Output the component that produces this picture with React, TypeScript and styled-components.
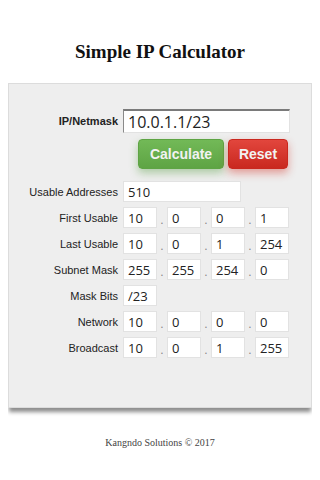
import * as React from "react";
import styled, { createGlobalStyle } from "styled-components";

const GlobalStyle = createGlobalStyle`
  body {
    margin: 8px;
    background: #ffffff;
    font-family: "Liberation Serif", "Times New Roman", serif;
  }
`;

const Title = styled.h1`
  margin: 32px 0 19px;
  font-size: 19px;
  line-height: 24px;
  font-weight: bold;
  text-align: center;
  color: #111;
`;

const Panel = styled.div`
  background: #eeeeee;
  border: 1px solid #dcdcdc;
  box-shadow: 0 5px 4px -1px rgba(0, 0, 0, 0.45);
  padding: 25px 0 49px;
  display: flex;
  flex-direction: column;
`;

const Row = styled.div<{ $gap?: number }>`
  display: flex;
  align-items: center;
  margin-bottom: ${(p) => (p.$gap !== undefined ? p.$gap : 5)}px;
`;

const Label = styled.label<{ $bold?: boolean }>`
  width: 114px;
  flex: none;
  text-align: right;
  padding-right: 5px;
  box-sizing: border-box;
  font-family: "Liberation Sans", Arial, sans-serif;
  font-size: 11px;
  font-weight: ${(p) => (p.$bold ? "bold" : "normal")};
  color: #222;
`;

const Field = styled.div<{ $w: number; $h?: number; $size?: number }>`
  width: ${(p) => p.$w}px;
  height: ${(p) => p.$h || 21}px;
  box-sizing: border-box;
  background: #fff;
  border: 1px solid #e2e2e2;
  padding-left: 4px;
  display: flex;
  align-items: center;
  font-family: "Open Sans", "Noto Sans", sans-serif;
  font-size: ${(p) => p.$size || 13}px;
  color: #222;
`;

const MainField = styled(Field)`
  border-top: 2px solid #7a7a7a;
  border-left: 1px solid #8a8a8a;
  padding-left: 4px;
`;

const Dot = styled.span`
  width: 10px;
  text-align: center;
  align-self: flex-end;
  font-family: "Liberation Sans", Arial, sans-serif;
  font-size: 12px;
  color: #888;
  line-height: 16px;
`;

const Buttons = styled.div`
  display: flex;
  gap: 4px;
  padding-left: 129px;
  margin-bottom: 12px;
`;

const Button = styled.button<{ $c1: string; $c2: string; $glow: string; $w: number }>`
  width: ${(p) => p.$w}px;
  height: 30px;
  border: 1px solid ${(p) => p.$c2};
  border-radius: 4px;
  background: linear-gradient(${(p) => p.$c1}, ${(p) => p.$c2});
  box-shadow: 0 4px 8px ${(p) => p.$glow};
  color: #f2f2f2;
  font-family: "Liberation Sans", Arial, sans-serif;
  font-weight: bold;
  font-size: 14px;
  padding: 0;
`;

const Footer = styled.div`
  margin-top: 29px;
  text-align: center;
  font-size: 10px;
  color: #444;
`;

const Octets: React.FC<{ values: string[] }> = ({ values }) => (
  <>
    {values.map((v, i) => (
      <React.Fragment key={i}>
        {i > 0 && <Dot>.</Dot>}
        <Field $w={34}>{v}</Field>
      </React.Fragment>
    ))}
  </>
);

const rows: [string, string[]][] = [
  ["First Usable", ["10", "0", "0", "1"]],
  ["Last Usable", ["10", "0", "1", "254"]],
  ["Subnet Mask", ["255", "255", "254", "0"]],
];

const rows2: [string, string[]][] = [
  ["Network", ["10", "0", "0", "0"]],
  ["Broadcast", ["10", "0", "1", "255"]],
];

const App: React.FC = () => {
  return (
    <>
      <GlobalStyle />
      <Title>Simple IP Calculator</Title>
      <Panel>
        <Row $gap={6}>
          <Label $bold>IP/Netmask</Label>
          <MainField $w={167} $h={24} $size={16}>
            10.0.1.1/23
          </MainField>
        </Row>
        <Buttons>
          <Button $w={86} $c1="#72b957" $c2="#5ea444" $glow="rgba(90,160,70,0.45)">
            Calculate
          </Button>
          <Button $w={60} $c1="#e2463d" $c2="#c9281f" $glow="rgba(210,50,40,0.45)">
            Reset
          </Button>
        </Buttons>
        <Row>
          <Label>Usable Addresses</Label>
          <Field $w={118}>510</Field>
        </Row>
        {rows.map(([l, v]) => (
          <Row key={l}>
            <Label>{l}</Label>
            <Octets values={v} />
          </Row>
        ))}
        <Row>
          <Label>Mask Bits</Label>
          <Field $w={34}>/23</Field>
        </Row>
        {rows2.map(([l, v], i) => (
          <Row key={l} $gap={i === rows2.length - 1 ? 0 : 5}>
            <Label>{l}</Label>
            <Octets values={v} />
          </Row>
        ))}
      </Panel>
      <Footer>Kangndo Solutions © 2017</Footer>
    </>
  );
};

export default App;
